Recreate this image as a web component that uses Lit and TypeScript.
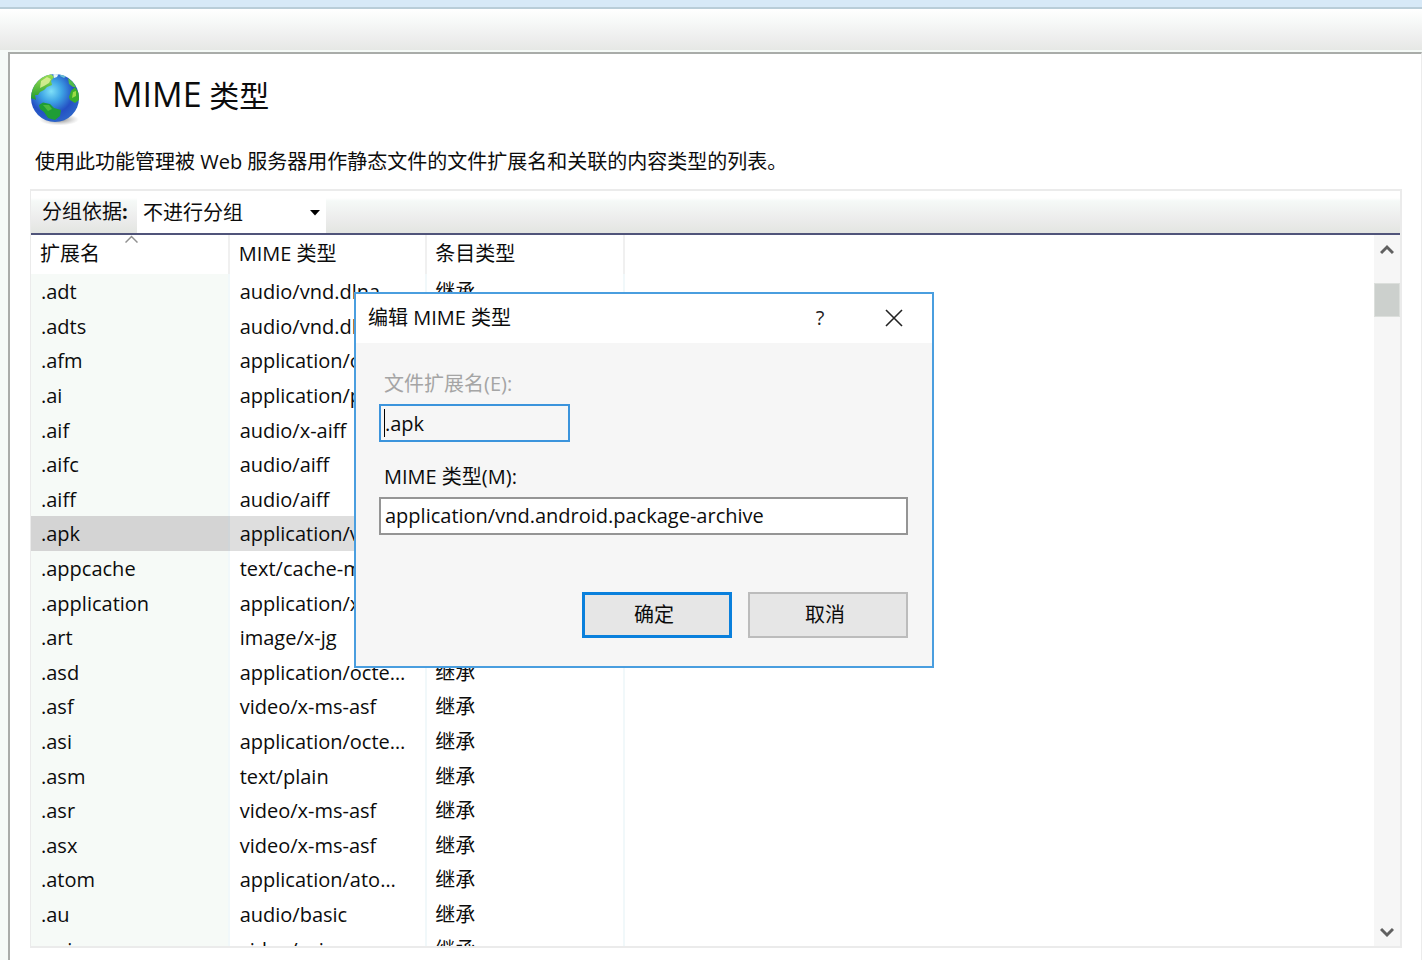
import { LitElement, html, css } from "lit";
import { customElement, state } from "lit/decorators.js";
import { classMap } from "lit/directives/class-map.js";

interface MimeEntry {
  ext: string;
  type: string;
}

const ENTRIES: MimeEntry[] = [
  { ext: ".adt", type: "audio/vnd.dlna.adts" },
  { ext: ".adts", type: "audio/vnd.dlna.adts" },
  { ext: ".afm", type: "application/octet-stream" },
  { ext: ".ai", type: "application/postscript" },
  { ext: ".aif", type: "audio/x-aiff" },
  { ext: ".aifc", type: "audio/aiff" },
  { ext: ".aiff", type: "audio/aiff" },
  { ext: ".apk", type: "application/vnd.android.package-archive" },
  { ext: ".appcache", type: "text/cache-manifest" },
  { ext: ".application", type: "application/x-ms-application" },
  { ext: ".art", type: "image/x-jg" },
  { ext: ".asd", type: "application/octet-stream" },
  { ext: ".asf", type: "video/x-ms-asf" },
  { ext: ".asi", type: "application/octet-stream" },
  { ext: ".asm", type: "text/plain" },
  { ext: ".asr", type: "video/x-ms-asf" },
  { ext: ".asx", type: "video/x-ms-asf" },
  { ext: ".atom", type: "application/atom+xml" },
  { ext: ".au", type: "audio/basic" },
  { ext: ".avi", type: "video/avi" },
];

@customElement("mime-globe")
class MimeGlobe extends LitElement {
  static styles = css`
    :host { display: block; width: 52px; height: 54px; }
    svg { display: block; }
  `;
  render() {
    return html`<svg width="52" height="54" viewBox="0 0 52 54" aria-hidden="true">
      <defs>
        <radialGradient id="sea" cx="42%" cy="36%" r="62%">
          <stop offset="0" stop-color="#7fe0f8" />
          <stop offset="0.35" stop-color="#3fa6e6" />
          <stop offset="0.75" stop-color="#2450c4" />
          <stop offset="1" stop-color="#2b62c8" />
        </radialGradient>
        <radialGradient id="shade">
          <stop offset="0" stop-color="#555" stop-opacity="0.75" />
          <stop offset="1" stop-color="#888" stop-opacity="0" />
        </radialGradient>
        <linearGradient id="land" x1="0" y1="0" x2="0" y2="1">
          <stop offset="0" stop-color="#9ee052" />
          <stop offset="1" stop-color="#1f9b2c" />
        </linearGradient>
        <clipPath id="ball"><circle cx="25" cy="25" r="24" /></clipPath>
      </defs>
      <ellipse cx="29" cy="46.500" rx="20" ry="6" fill="url(#shade)" />
      <circle cx="25" cy="25" r="24" fill="url(#sea)" />
      <g clip-path="url(#ball)">
        <path d="M0 25 L3 11 L12 3 L21 1 L24 4 L21 8 L22 12 L17 14 L14 17 L10 19 L8 22 L5 22 L6 27 L4 26 Z" fill="url(#land)" />
        <path d="M11 8 L17 4 L21 6 L19 10 L14 13 L10 15 Z" fill="#dff09a" opacity="0.85" />
        <path d="M9 32 L13 29.500 L20 31 L24 35 L31 37 L30 43 L25 47 L18 45 L14 39 L10 36 Z" fill="#1f9d35" />
        <path d="M13 32 L19 32 L22 36 L18 38 Z" fill="#4cba3f" />
        <path d="M38 5 L43 9 L46 14 L43 14 L39 11 Z" fill="#50bb4a" />
        <path d="M41 18 L45 14 L49 20 L49 27 L45 30 L40 27 L39 24 Z" fill="#38ad2d" />
        <path d="M43 19 L46 18 L46 23 L42 25 Z" fill="#9bdb47" />
        <path d="M23 0 L29 0 L27 4 L24 5 Z" fill="#e6f5fa" />
        <path d="M31 1 L37 3 L34 5 L30 3 Z" fill="#68bfd0" />
      </g>
    </svg>`;
  }
}

@customElement("mime-dialog")
class MimeDialog extends LitElement {
  static styles = css`
    :host {
      display: block;
      box-sizing: border-box;
      width: 580px;
      border: 2px solid #4a9edf;
      background: #f6f6f6;
      color: #0c0c0c;
    }
    * { box-sizing: border-box; }
    .title {
      display: flex;
      align-items: center;
      height: 49px;
      padding: 0 20px 2px 12px;
      background: #fff;
    }
    h2 { flex: 1; margin: 0; font: inherit; }
    .tool {
      display: flex;
      align-items: center;
      justify-content: center;
      width: 36px;
      height: 36px;
      padding: 0;
      border: 0;
      background: none;
      color: #222;
      font: inherit;
    }
    .tools { display: flex; gap: 38px; }
    form { padding: 26px 24px 28px 23px; }
    label { display: block; padding-left: 5px; line-height: 30px; }
    .dim { color: #a5a5a5; }
    input {
      display: block;
      width: 100%;
      height: 38px;
      margin: 5px 0 20px;
      padding: 0 4px 2px;
      border: 2px solid #959595;
      border-radius: 0;
      outline: 0;
      background: #fff;
      color: inherit;
      font: inherit;
    }
    .short { width: 191px; padding-bottom: 0; border-color: #3c94dc; background: #f6f6f6; }
    .caret {
      position: absolute;
      left: 5px;
      top: 5px;
      width: 1px;
      height: 28px;
      background: #000;
    }
    .box { position: relative; }
    .actions {
      display: flex;
      justify-content: flex-end;
      gap: 16px;
      padding-top: 37px;
    }
    .btn {
      width: 160px;
      height: 46px;
      padding: 0 6px 0 0;
      border: 2px solid #bcbcbc;
      background: #e6e6e6;
      color: inherit;
      font: inherit;
    }
    .primary { width: 150px; border: 3px solid #0a80dc; }
  `;
  render() {
    return html`
      <div class="title">
        <h2>编辑 MIME 类型</h2>
        <div class="tools">
          <button class="tool" type="button">?</button>
          <button class="tool" type="button" aria-label="关闭">
            <svg width="18" height="18" viewBox="0 0 18 18" fill="none" stroke="#222" stroke-width="1.6">
              <path d="M1 1 L17 17 M17 1 L1 17" />
            </svg>
          </button>
        </div>
      </div>
      <form @submit=${(e: Event) => e.preventDefault()}>
        <label class="dim" for="ext">文件扩展名(E):</label>
        <div class="box">
          <input class="short" id="ext" type="text" readonly .value=${".apk"} />
          <span class="caret"></span>
        </div>
        <label for="mime">MIME 类型(M):</label>
        <input id="mime" type="text" .value=${"application/vnd.android.package-archive"} />
        <div class="actions">
          <button class="btn primary" type="submit">确定</button>
          <button class="btn" type="button">取消</button>
        </div>
      </form>
    `;
  }
}

@customElement("app-root")
class AppRoot extends LitElement {
  @state() private selected = ".apk";

  static styles = css`
    :host {
      display: flex;
      flex-direction: column;
      position: relative;
      height: 100vh;
      overflow: hidden;
      background: #f5faf7;
      color: #0c0c0c;
      font: 20px/28px "Open Sans", "Noto Sans CJK SC", sans-serif;
    }
    * { box-sizing: border-box; }
    .strip { flex: none; height: 9px; background: #d7e9f7; border-bottom: 2px solid #b9cdd8; }
    .toolbar {
      flex: none;
      height: 41px;
      background: linear-gradient(#fff, #f7f9f8 30%, #eeeeee 70%, #e6e8e5);
    }
    .panel {
      flex: 1;
      min-height: 0;
      display: flex;
      flex-direction: column;
      margin: 2px 0 0 8px;
      padding: 19px 19px 12px 20px;
      border: solid #a9aca9;
      border-width: 2px 0 0 2px;
      border-right: 1px solid #ececec;
      background: #fff;
    }
    .heading { display: flex; gap: 30px; height: 54px; }
    h1 { margin: 0; font-size: 30px; line-height: 42px; font-weight: 400; }
    .latin { font-size: 34px; }
    .about { margin: 21px 0 13px; padding-left: 5px; }
    .list {
      flex: 1;
      min-height: 0;
      display: flex;
      flex-direction: column;
      border: 2px solid #ebebeb;
      border-left-width: 1px;
    }
    .groupbar {
      flex: none;
      display: flex;
      align-items: stretch;
      height: 44px;
      padding-top: 4px;
      border-bottom: 2px solid #50547a;
      background: linear-gradient(#fff 3px, #f5f9f7 6px, #ececec 24px, #e3e5e1) content-box, #fff;
    }
    .groupbar label { width: 106px; padding-left: 11px; line-height: 34px; }
    .pick { position: relative; width: 189px; }
    select {
      width: 100%;
      height: 100%;
      padding: 0 24px 2px 6px;
      border: 0;
      border-radius: 0;
      appearance: none;
      background: #fff;
      color: inherit;
      font: inherit;
    }
    .drop { position: absolute; right: 6px; top: 15px; pointer-events: none; }
    .view { flex: 1; min-height: 0; display: flex; justify-content: space-between; }
    .rows { flex: 1; overflow: hidden; }
    table { width: 594px; height: 731px; border-collapse: collapse; table-layout: fixed; }
    th, td {
      padding: 2px 15px 0 10px;
      border-right: 2px solid #f1f8fa;
      font-weight: 400;
      text-align: left;
      white-space: nowrap;
      overflow: hidden;
      text-overflow: ellipsis;
    }
    th {
      position: relative;
      height: 39px;
      padding: 0 12px 2px 9px;
      border-right-color: #f0f0f0;
      overflow: visible;
    }
    td:nth-child(3), th:nth-child(3) { padding-left: 8px; }
    td:first-child { background: #f6faf7; }
    .on td { background: #dedede; border-right-color: #d0d5d8; }
    .on td:first-child { background: #d4d4d4; }
    .sort { position: absolute; left: 94px; top: 0; }
    .scroll {
      flex: none;
      display: flex;
      flex-direction: column;
      align-items: center;
      width: 26px;
      padding: 9px 0 8px;
      background: #f6f6f6;
    }
    .scroll svg { flex: none; }
    .thumb { width: 26px; height: 34px; margin: 28px 0 auto; background: #ccd0cd; border: 1px solid #dcdfdc; }
    .dialog { position: absolute; left: 354px; top: 292px; }
  `;

  render() {
    return html`
      <div class="strip"></div>
      <div class="toolbar"></div>
      <main class="panel">
        <header class="heading">
          <mime-globe></mime-globe>
          <h1><span class="latin">MIME</span> 类型</h1>
        </header>
        <div class="about">使用此功能管理被 Web 服务器用作静态文件的文件扩展名和关联的内容类型的列表。</div>
        <section class="list">
          <div class="groupbar">
            <label for="group">分组依据<b>:</b></label>
            <div class="pick">
              <select id="group"><option>不进行分组</option></select>
              <svg class="drop" width="10" height="6" viewBox="0 0 10 6"><path d="M0 0 H10 L5 5.500 Z" fill="#000" /></svg>
            </div>
          </div>
          <div class="view">
            <div class="rows">
              <table>
                <thead>
                  <tr>
                    <th>扩展名
                      <svg class="sort" width="13" height="8" viewBox="0 0 13 8" fill="none" stroke="#909090" stroke-width="1.500"><path d="M0.500 7.500 L6.500 1.500 L12.500 7.500" /></svg>
                    </th>
                    <th>MIME 类型</th>
                    <th>条目类型</th>
                  </tr>
                </thead>
                <tbody>
                  ${ENTRIES.map(
                    (e) => html`<tr
                      class=${classMap({ on: e.ext === this.selected })}
                      @click=${() => (this.selected = e.ext)}
                    ><td>${e.ext}</td><td>${e.type}</td><td>继承</td></tr>`
                  )}
                </tbody>
              </table>
            </div>
            <div class="scroll">
              <svg width="14" height="11" viewBox="0 0 14 11" fill="none" stroke="#606060" stroke-width="3"><path d="M1 9 L7 3 L13 9" /></svg>
              <div class="thumb"></div>
              <svg width="14" height="11" viewBox="0 0 14 11" fill="none" stroke="#606060" stroke-width="3"><path d="M1 2 L7 8 L13 2" /></svg>
            </div>
          </div>
        </section>
      </main>
      <mime-dialog class="dialog" role="dialog" aria-label="编辑 MIME 类型"></mime-dialog>
    `;
  }
}
